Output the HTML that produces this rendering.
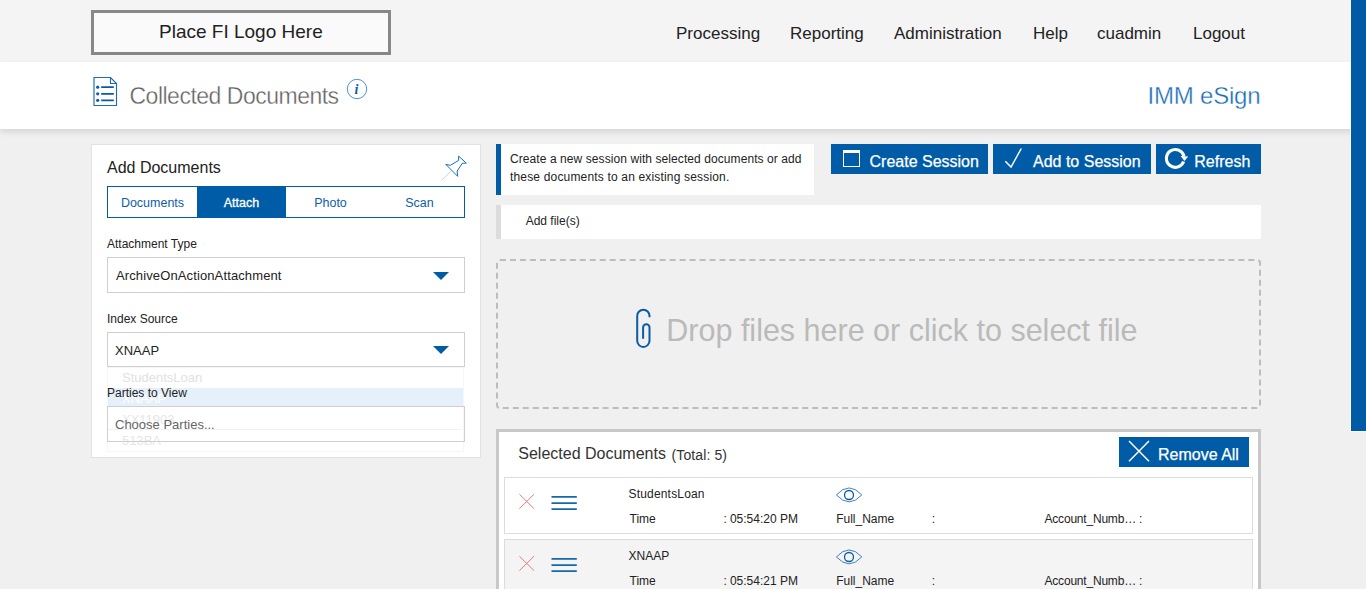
<!DOCTYPE html>
<html><head><meta charset="utf-8">
<style>
*{margin:0;padding:0;box-sizing:border-box}
html,body{width:1366px;height:589px;overflow:hidden;background:#f0f0f0;font-family:"Liberation Sans",sans-serif;color:#222}
.a{position:absolute}
.t{position:absolute;white-space:nowrap;line-height:1}
#top{left:0;top:0;width:1366px;height:62px;background:#f4f4f4}
#logo{left:91px;top:10px;width:300px;height:45px;border:3px solid #888;background:#fafafa}
.nav{font-size:17px;color:#222;top:25px}
#band{left:0;top:62px;width:1366px;height:67px;background:#fff;box-shadow:0 3px 6px rgba(0,0,0,0.11)}
#scroll{left:1351px;top:0;width:15px;height:431px;background:#005aa5;box-shadow:-1px 1px 0 #faf8f6}
#panel{left:91px;top:144px;width:390px;height:314px;background:#fff;border:1px solid #e2e2e2}
#tabs{left:107px;top:186px;width:358px;height:32px;border:1px solid #005ca6}
.tab{top:0;height:30px;width:89px}
.tabt{font-size:12.5px;color:#0d5ea8;top:9.5px;left:0;width:89px;text-align:center}
.sel{left:107px;width:358px;border:1px solid #cfcfcf;background:#fff}
.tri{width:0;height:0;border-left:8px solid transparent;border-right:8px solid transparent;border-top:8px solid #005ca6}
.btn{background:#005ca6;height:30px}
.bt{font-size:16px;color:#fff;-webkit-text-stroke:0.25px #fff}
.rowt{font-size:12px;color:#222}
</style></head><body>
<div class="a" id="top"></div>
<div class="a" id="logo"></div>
<div class="t" style="left:159px;top:22px;font-size:19px;color:#222">Place FI Logo Here</div>
<div class="t nav" style="left:676px">Processing</div>
<div class="t nav" style="left:790px">Reporting</div>
<div class="t nav" style="left:894px">Administration</div>
<div class="t nav" style="left:1033px">Help</div>
<div class="t nav" style="left:1097px">cuadmin</div>
<div class="t nav" style="left:1193px">Logout</div>

<div class="a" id="band"></div>
<svg class="a" style="left:88px;top:72px" width="36" height="38" viewBox="0 0 36 38">
  <path d="M6,5.5 H22.5 L28.5,11.5 V33.5 H6 Z" fill="none" stroke="#1a6cb4" stroke-width="1.15"/>
  <path d="M22.5,5.5 V11.5 H28.5" fill="none" stroke="#1a6cb4" stroke-width="1.1"/>
  <circle cx="9.7" cy="15.2" r="1.6" fill="#0b59a8"/>
  <circle cx="9.7" cy="21.8" r="1.6" fill="#0b59a8"/>
  <circle cx="9.7" cy="28.3" r="1.6" fill="#0b59a8"/>
  <path d="M13.2,15.2 H25.8 M13.2,21.8 H25.8 M13.2,28.3 H25.8" stroke="#0b59a8" stroke-width="1.8"/>
</svg>
<div class="t" style="left:129.5px;top:85px;font-size:23px;letter-spacing:-0.5px;color:#5f5f5f;-webkit-text-stroke:0.35px #fff">Collected Documents</div>
<svg class="a" style="left:342px;top:74px" width="30" height="30" viewBox="0 0 30 30">
  <circle cx="15" cy="15" r="9.7" fill="none" stroke="#3a87c9" stroke-width="0.9"/>
</svg>
<div class="t" style="left:354.5px;top:83px;font-family:'Liberation Serif',serif;font-weight:bold;font-style:italic;font-size:14px;color:#0b59a8">i</div>
<div class="t" style="left:1147.5px;top:84px;font-size:24px;letter-spacing:-0.2px;color:#176bb7;-webkit-text-stroke:0.35px #fff">IMM eSign</div>
<div class="a" id="scroll"></div>

<!-- left panel -->
<div class="a" id="panel"></div>
<div class="t" style="left:107px;top:160px;font-size:16px;color:#222">Add Documents</div>
<svg class="a" style="left:436px;top:150px" width="36" height="36" viewBox="436 150 36 36">
  <path d="M458.6,156.1 L466.3,163.1 L462.3,163.3 L457.1,171.1 L457.7,176.3 L445.8,164.4 L450.4,165.3 L458.6,160.4 Z" fill="none" stroke="#1d6db3" stroke-width="1"/>
  <path d="M451,171.1 L441.5,180.3" stroke="#a6c4e0" stroke-width="0.7"/>
</svg>
<div class="a" id="tabs">
  <div class="a tab" style="left:0"><div class="t tabt">Documents</div></div>
  <div class="a tab" style="left:89px;background:#005ca6"><div class="t tabt" style="color:#fff;-webkit-text-stroke:0.3px #fff">Attach</div></div>
  <div class="a tab" style="left:178px"><div class="t tabt">Photo</div></div>
  <div class="a tab" style="left:267px"><div class="t tabt">Scan</div></div>
</div>
<div class="t" style="left:107px;top:237.5px;font-size:12px">Attachment Type</div>
<div class="a sel" style="top:257px;height:36px"></div>
<div class="t" style="left:116px;top:269px;font-size:13px;letter-spacing:0.12px">ArchiveOnActionAttachment</div>
<div class="a tri" style="left:433px;top:272px"></div>
<div class="t" style="left:107px;top:313px;font-size:12px">Index Source</div>
<div class="a sel" style="top:332px;height:35px"></div>
<div class="t" style="left:115px;top:344px;font-size:13px">XNAAP</div>
<div class="a tri" style="left:433px;top:346px"></div>
<!-- faded dropdown -->
<div class="a" style="left:107px;top:367px;width:357px;height:85px;background:#fff;border:1px solid #f6f6f6"></div>
<div class="a" style="left:108px;top:388px;width:355px;height:18px;background:#e6f0fa"></div>
<div class="a" style="left:108px;top:429px;width:354px;height:1px;background:#f2f2f2"></div>
<div class="t" style="left:122px;top:371px;font-size:13px;color:#e2e2e2">StudentsLoan</div>
<div class="t" style="left:122px;top:392px;font-size:13px;color:#fff">XNAAP</div>
<div class="t" style="left:122px;top:412.7px;font-size:13px;color:#e6e6e6">XX11903</div>
<div class="t" style="left:122px;top:434px;font-size:13px;color:#e6e6e6">513BA</div>
<div class="t" style="left:107px;top:386.5px;font-size:12px">Parties to View</div>
<div class="a sel" style="top:406px;height:36px;background:transparent"></div>
<div class="t" style="left:115px;top:417.5px;font-size:13px;color:#666">Choose Parties...</div>

<!-- right side -->
<div class="a" style="left:496px;top:144px;width:318px;height:51px;background:#fff;border-left:5px solid #005ca6"></div>
<div class="t" style="left:510px;top:149.6px;font-size:12px;line-height:18px;letter-spacing:0.08px">Create a new session with selected documents or add<br><span style="letter-spacing:0.17px">these documents to an existing session.</span></div>

<div class="a btn" style="left:831px;top:144px;width:157px"></div>
<div class="a" style="left:843px;top:150px;width:17px;height:17px;border:1px solid #fff;border-top:3px solid #fff"></div>
<div class="t bt" style="left:869.5px;top:153.5px">Create Session</div>
<div class="a btn" style="left:993px;top:144px;width:158px"></div>
<svg class="a" style="left:1000px;top:144px" width="30" height="30" viewBox="1000 144 30 30">
  <path d="M1005.3,161.3 L1011,167 L1021.3,148.5" fill="none" stroke="#fff" stroke-width="1.5"/>
</svg>
<div class="t bt" style="left:1033px;top:153.5px">Add to Session</div>
<div class="a btn" style="left:1156px;top:144px;width:105px"></div>
<svg class="a" style="left:1160px;top:144px" width="32" height="30" viewBox="1160 144 32 30">
  <path d="M1183.66,161.5 A8.9,8.9 0 1 1 1183.97,156.3" fill="none" stroke="#fff" stroke-width="3.1"/>
  <path d="M1180.6,156 L1188.2,156.4 L1184.5,160.9 Z" fill="#fff"/>
</svg>
<div class="t bt" style="left:1194.3px;top:153.5px">Refresh</div>

<div class="a" style="left:496px;top:205px;width:765px;height:34px;background:#fff;border-left:5px solid #dcdcdc"></div>
<div class="t" style="left:525.7px;top:214.7px;font-size:12px">Add file(s)</div>

<div class="a" style="left:496px;top:259px;width:765px;height:150px;border:2px dashed #bdbdbd;border-radius:4px"></div>
<svg class="a" style="left:630px;top:304px" width="26" height="48" viewBox="630 304 26 48">
  <path d="M643.1,338.7 V327.4 A3.2,3.2 0 0 1 649.5,327.4 V340.75 A6.15,6.15 0 0 1 637.2,340.75 V315.85 A6.15,6.15 0 0 1 649.5,315.85 V317.3" fill="none" stroke="#0d5aa7" stroke-width="2"/>
</svg>
<div class="t" style="left:666.3px;top:315px;font-size:30.5px;color:#bababa">Drop files here or click to select file</div>

<!-- selected documents -->
<div class="a" style="left:496px;top:429px;width:765px;height:200px;background:#fff;border:3px solid #c8c8c8"></div>
<div class="t" style="left:518.3px;top:446px;font-size:16px;color:#333">Selected Documents</div>
<div class="t" style="left:671.6px;top:447.6px;font-size:14px;color:#333;letter-spacing:0.1px">(Total: 5)</div>
<div class="a btn" style="left:1119px;top:437px;width:130px"></div>
<svg class="a" style="left:1125px;top:437px" width="30" height="30" viewBox="1125 437 30 30">
  <path d="M1129,441 L1149,461.3 M1149,441 L1129,461.3" stroke="#fff" stroke-width="1.5"/>
</svg>
<div class="t bt" style="left:1158px;top:446.5px">Remove All</div>

<div class="a" style="left:504px;top:477px;width:749px;height:57px;background:#fff;border:1px solid #dcdcdc"></div>
<div class="a" style="left:504px;top:539px;width:749px;height:57px;background:#f4f4f4;border:1px solid #dcdcdc"></div>

<svg class="a" style="left:504px;top:477px" width="600" height="120" viewBox="504 477 600 120">
  <g id="rowicons">
  <path d="M519.4,494.2 L534.1,508.7 M534.1,494.2 L519.4,508.7" stroke="#e07c80" stroke-width="1"/>
  <path d="M551.5,496.9 H576.8 M551.5,503 H576.8 M551.5,509.2 H576.8" stroke="#1768a8" stroke-width="1.75"/>
  <path d="M836.4,494.9 Q849,481 861.8,494.9 Q849,508.8 836.4,494.9 Z" fill="none" stroke="#2a76bb" stroke-width="0.9"/>
  <circle cx="849" cy="495" r="4.5" fill="none" stroke="#0b5aa8" stroke-width="1.3"/>
  </g>
  <use href="#rowicons" transform="translate(0,62)"/>
</svg>

<div class="t rowt" style="left:628.5px;top:487.8px;letter-spacing:0.18px">StudentsLoan</div>
<div class="t rowt" style="left:629.5px;top:512.8px">Time</div>
<div class="t rowt" style="left:723.6px;top:512.8px">:</div>
<div class="t rowt" style="left:729.9px;top:512.8px">05:54:20 PM</div>
<div class="t rowt" style="left:836.2px;top:512.8px">Full_Name</div>
<div class="t rowt" style="left:931.7px;top:512.8px">:</div>
<div class="t rowt" style="left:1044.5px;top:512.8px"><span style="letter-spacing:-0.2px">Account_Numb… :</span></div>

<div class="t rowt" style="left:628.5px;top:549.8px">XNAAP</div>
<div class="t rowt" style="left:629.5px;top:574.8px">Time</div>
<div class="t rowt" style="left:723.6px;top:574.8px">:</div>
<div class="t rowt" style="left:729.9px;top:574.8px">05:54:21 PM</div>
<div class="t rowt" style="left:836.2px;top:574.8px">Full_Name</div>
<div class="t rowt" style="left:931.7px;top:574.8px">:</div>
<div class="t rowt" style="left:1044.5px;top:574.8px"><span style="letter-spacing:-0.2px">Account_Numb… :</span></div>
</body></html>
